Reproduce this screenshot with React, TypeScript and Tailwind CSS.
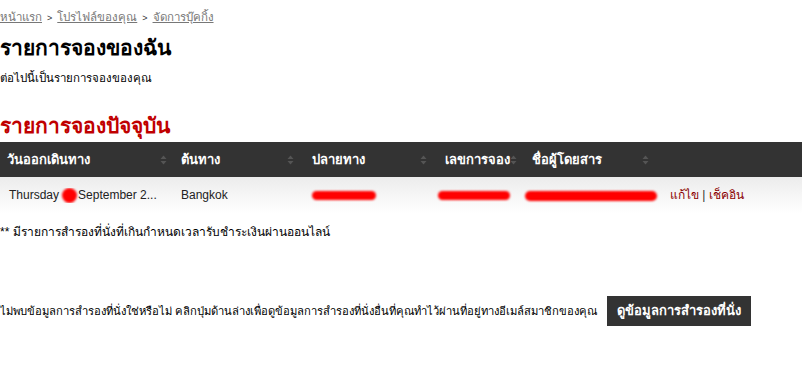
const font = "font-['Tahoma','Liberation_Sans','Noto_Sans',sans-serif]";

function SortIcon() {
  return (
    <svg width="7" height="10" viewBox="0 0 7 10" className="shrink-0">
      <path d="M3.5 0.5 L6.5 4 L0.5 4 Z" fill="#555" />
      <path d="M3.5 9.5 L6.5 6 L0.5 6 Z" fill="#555" />
    </svg>
  );
}

function Blob({ className }: { className: string }) {
  return <span className={"inline-block rounded-full bg-[#ff0000] blur-[1px] " + className} />;
}

const columns = [
  { label: "วันออกเดินทาง", w: "w-[173px]", pl: "pl-[7px]" },
  { label: "ต้นทาง", w: "w-[127px]", pl: "pl-[8px]" },
  { label: "ปลายทาง", w: "w-[133px]", pl: "pl-[12px]" },
  { label: "เลขการจอง", w: "w-[82px]", pl: "pl-[12px]" },
  { label: "ชื่อผู้โดยสาร", w: "w-[140px]", pl: "pl-[17px]" },
];

export default function App() {
  return (
    <div className={`${font} min-h-[374px] w-[802px] bg-white text-[12px] leading-[14px] text-black`}>
      <div className="pt-[10px] text-[11.5px] text-[#777]">
        <a className="underline">หน้าแรก</a>
        <span className="mx-[5px] text-[9px] text-[#333]">&gt;</span>
        <a className="underline">โปรไฟล์ของคุณ</a>
        <span className="mx-[5px] text-[9px] text-[#333]">&gt;</span>
        <a className="underline">จัดการบุ๊คกิ้ง</a>
      </div>

      <h1 className="mt-[11px] text-[21px] leading-[24px] font-bold">รายการจองของฉัน</h1>
      <p className="mt-[11px] text-[11.5px]">ต่อไปนี้เป็นรายการจองของคุณ</p>

      <h2 className="mt-[29px] text-[21px] leading-[24px] font-bold text-[#c00000]">รายการจองปัจจุบัน</h2>

      <div className="mt-[4px]">
        <div className="flex h-[35px] items-center bg-[#333333] text-[13px] font-bold whitespace-nowrap text-white">
          {columns.map((c) => (
            <div key={c.label} className={`flex items-center justify-between pr-[6px] ${c.w} ${c.pl}`}>
              <span>{c.label}</span>
              <SortIcon />
            </div>
          ))}
          <div className="flex-1" />
        </div>
        <div className="flex h-[36px] items-center bg-gradient-to-b from-[#ececec] to-white text-[#222]">
          <div className="flex w-[173px] items-center gap-[1px] overflow-hidden pl-[9px] whitespace-nowrap">
            <span>Thursday</span>
            <Blob className="ml-[2px] h-[15px] w-[15px]" />
            <span>September 2...</span>
          </div>
          <div className="w-[127px] pl-[8px]">Bangkok</div>
          <div className="w-[133px] pl-[12px]">
            <Blob className="h-[9px] w-[64px] align-middle" />
          </div>
          <div className="w-[82px] pl-[5px]">
            <Blob className="h-[9px] w-[72px] align-middle" />
          </div>
          <div className="w-[140px] pl-[10px]">
            <Blob className="h-[10px] w-[132px] align-middle" />
          </div>
          <div className="flex-1 pl-[15px] text-[#8b0000]">
            แก้ไข <span className="text-[#333]">|</span> เช็คอิน
          </div>
        </div>
      </div>

      <p className="mt-[12px]">** มีรายการสำรองที่นั่งที่เกินกำหนดเวลารับชำระเงินผ่านออนไลน์</p>

      <div className="mt-[57px] flex items-center">
        <p className="text-[11.25px]">ไม่พบข้อมูลการสำรองที่นั่งใช่หรือไม่ คลิกปุ่มด้านล่างเพื่อดูข้อมูลการสำรองที่นั่งอื่นที่คุณทำไว้ผ่านที่อยู่ทางอีเมล์สมาชิกของคุณ</p>
        <button className="ml-[10px] h-[30px] bg-[#333333] px-[10px] text-[13px] font-bold text-white">
          ดูข้อมูลการสำรองที่นั่ง
        </button>
      </div>
    </div>
  );
}
